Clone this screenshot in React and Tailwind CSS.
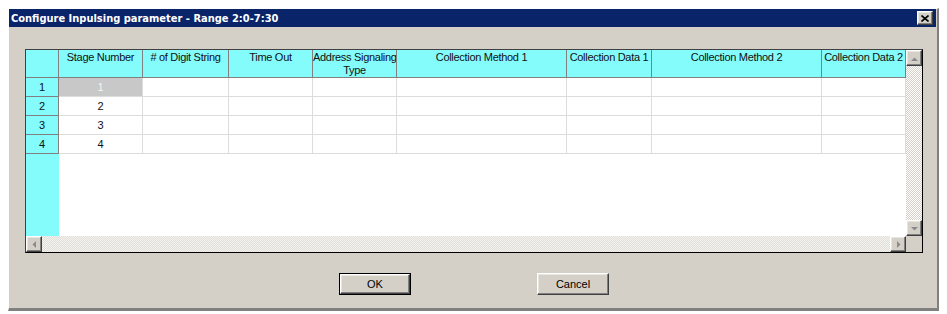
import React from 'react';

const columns = [
  { w: 'w-[84px]', label: 'Stage Number' },
  { w: 'w-[86px]', label: '# of Digit String' },
  { w: 'w-[84px]', label: 'Time Out' },
  { w: 'w-[84px]', label: ['Address Signaling', 'Type'] },
  { w: 'w-[170px]', label: 'Collection Method 1' },
  { w: 'w-[85px]', label: 'Collection Data 1' },
  { w: 'w-[170px]', label: 'Collection Method 2' },
  { w: 'w-[84px]', label: 'Collection Data 2' },
];

const rows = [1, 2, 3, 4];

const raised =
  'border border-t-white border-l-white border-r-[#404040] border-b-[#404040] shadow-[inset_-1px_-1px_#808080,inset_1px_1px_#e8e6e1]';

function Arrow({ dir }) {
  const pts = {
    up: '4,10 11,10 7.5,6.5',
    down: '4,6 11,6 7.5,9.5',
    left: '9,4 9,11 5.5,7.5',
    right: '6,4 6,11 9.5,7.5',
  }[dir];
  return (
    <svg width="14" height="14" viewBox="0 0 14 14">
      <polygon points={pts} fill="#8a8a8a" />
    </svg>
  );
}

function ScrollButton({ dir }) {
  return (
    <div className={`w-[16px] h-[16px] shrink-0 bg-[#d4d0c8] flex items-center justify-center ${raised}`}>
      <Arrow dir={dir} />
    </div>
  );
}

function WinButton({ children, isDefault }) {
  const inner = (
    <div className={`w-full h-full bg-[#d4d0c8] flex items-center justify-center text-[11px] text-black ${raised}`}>
      {children}
    </div>
  );
  if (isDefault) {
    return <div className="w-[72px] h-[22px] border border-black">{inner}</div>;
  }
  return <div className="w-[72px] h-[22px]">{inner}</div>;
}

export default function App() {
  return (
    <div className="w-[947px] h-[314px] bg-white pt-[8px] pl-[8px] font-['Liberation_Sans',Arial,sans-serif]">
      <div className="w-[931px] h-[303px] bg-[#d4d0c8] border-t border-l border-t-white border-l-white border-r-[2px] border-b-[3px] border-r-[#808080] border-b-[#808080] flex flex-col">
        {/* title bar */}
        <div className="h-[18px] mr-[1px] bg-[#0a246a] flex items-center justify-between pl-[2px] pr-[3px]">
          <span className="text-white font-bold text-[11px] font-['DejaVu_Sans_Condensed','Liberation_Sans',sans-serif] leading-none">
            Configure Inpulsing parameter - Range 2:0-7:30
          </span>
          <div className={`w-[16px] h-[14px] bg-[#d4d0c8] flex items-center justify-center ${raised}`}>
            <svg width="8" height="7" viewBox="0 0 8 7">
              <path d="M0.5 0.5 L7.5 6.5 M7.5 0.5 L0.5 6.5" stroke="#000" strokeWidth="1.6" />
            </svg>
          </div>
        </div>

        {/* grid */}
        <div className="mt-[22px] ml-[16px] w-[898px] h-[204px] border border-t-[#404040] border-l-[#404040] border-r-black border-b-black bg-white flex flex-col">
          <div className="flex h-[186px]">
            <div className="w-[880px] flex flex-col">
              {/* header */}
              <div className="flex h-[28px] shrink-0">
                <div className="w-[33px] bg-[#84fcfc] border-r border-b border-[#808080]" />
                {columns.map((c, i) => (
                  <div
                    key={i}
                    className={`${c.w} bg-[#84fcfc] border-r border-b border-[#808080] pt-[1px] text-[11px] tracking-[-0.3px] leading-[13px] text-center text-[#111] whitespace-nowrap overflow-hidden`}
                  >
                    {Array.isArray(c.label) ? (
                      <>
                        {c.label[0]}
                        <br />
                        {c.label[1]}
                      </>
                    ) : (
                      c.label
                    )}
                  </div>
                ))}
              </div>
              {/* rows */}
              {rows.map((r) => (
                <div key={r} className="flex h-[19px] shrink-0">
                  <div className="w-[33px] bg-[#84fcfc] border-r border-b border-[#808080] flex items-center justify-center text-[11px] text-[#111]">
                    {r}
                  </div>
                  {columns.map((c, i) => (
                    <div
                      key={i}
                      className={`${c.w} border-r border-b border-[#dcdcdc] flex items-center justify-center text-[11px] ${
                        i === 0 && r === 1 ? 'bg-[#c8c8c8] text-[#f4f4f4]' : 'text-[#111]'
                      }`}
                    >
                      {i === 0 ? r : ''}
                    </div>
                  ))}
                </div>
              ))}
              {/* empty space */}
              <div className="flex flex-1">
                <div className="w-[33px] bg-[#84fcfc]" />
                <div className="flex-1 bg-white" />
              </div>
            </div>
            {/* vertical scrollbar */}
            <div className="w-[16px] flex flex-col">
              <ScrollButton dir="up" />
              <div className="flex-1 bg-[image:repeating-conic-gradient(#d4d0c8_0%_25%,#ffffff_0%_50%)] bg-[length:2px_2px]" />
              <ScrollButton dir="down" />
            </div>
          </div>
          {/* horizontal scrollbar */}
          <div className="flex h-[16px]">
            <ScrollButton dir="left" />
            <div className="flex-1 bg-[image:repeating-conic-gradient(#e0ded8_0%_25%,#f4f3f0_0%_50%)] bg-[length:2px_2px]" />
            <ScrollButton dir="right" />
            <div className="w-[16px] bg-[#d4d0c8]" />
          </div>
        </div>

        {/* buttons */}
        <div className="mt-[20px] flex justify-center gap-[126px] pl-[2px]">
          <WinButton isDefault>OK</WinButton>
          <WinButton>Cancel</WinButton>
        </div>
      </div>
    </div>
  );
}
